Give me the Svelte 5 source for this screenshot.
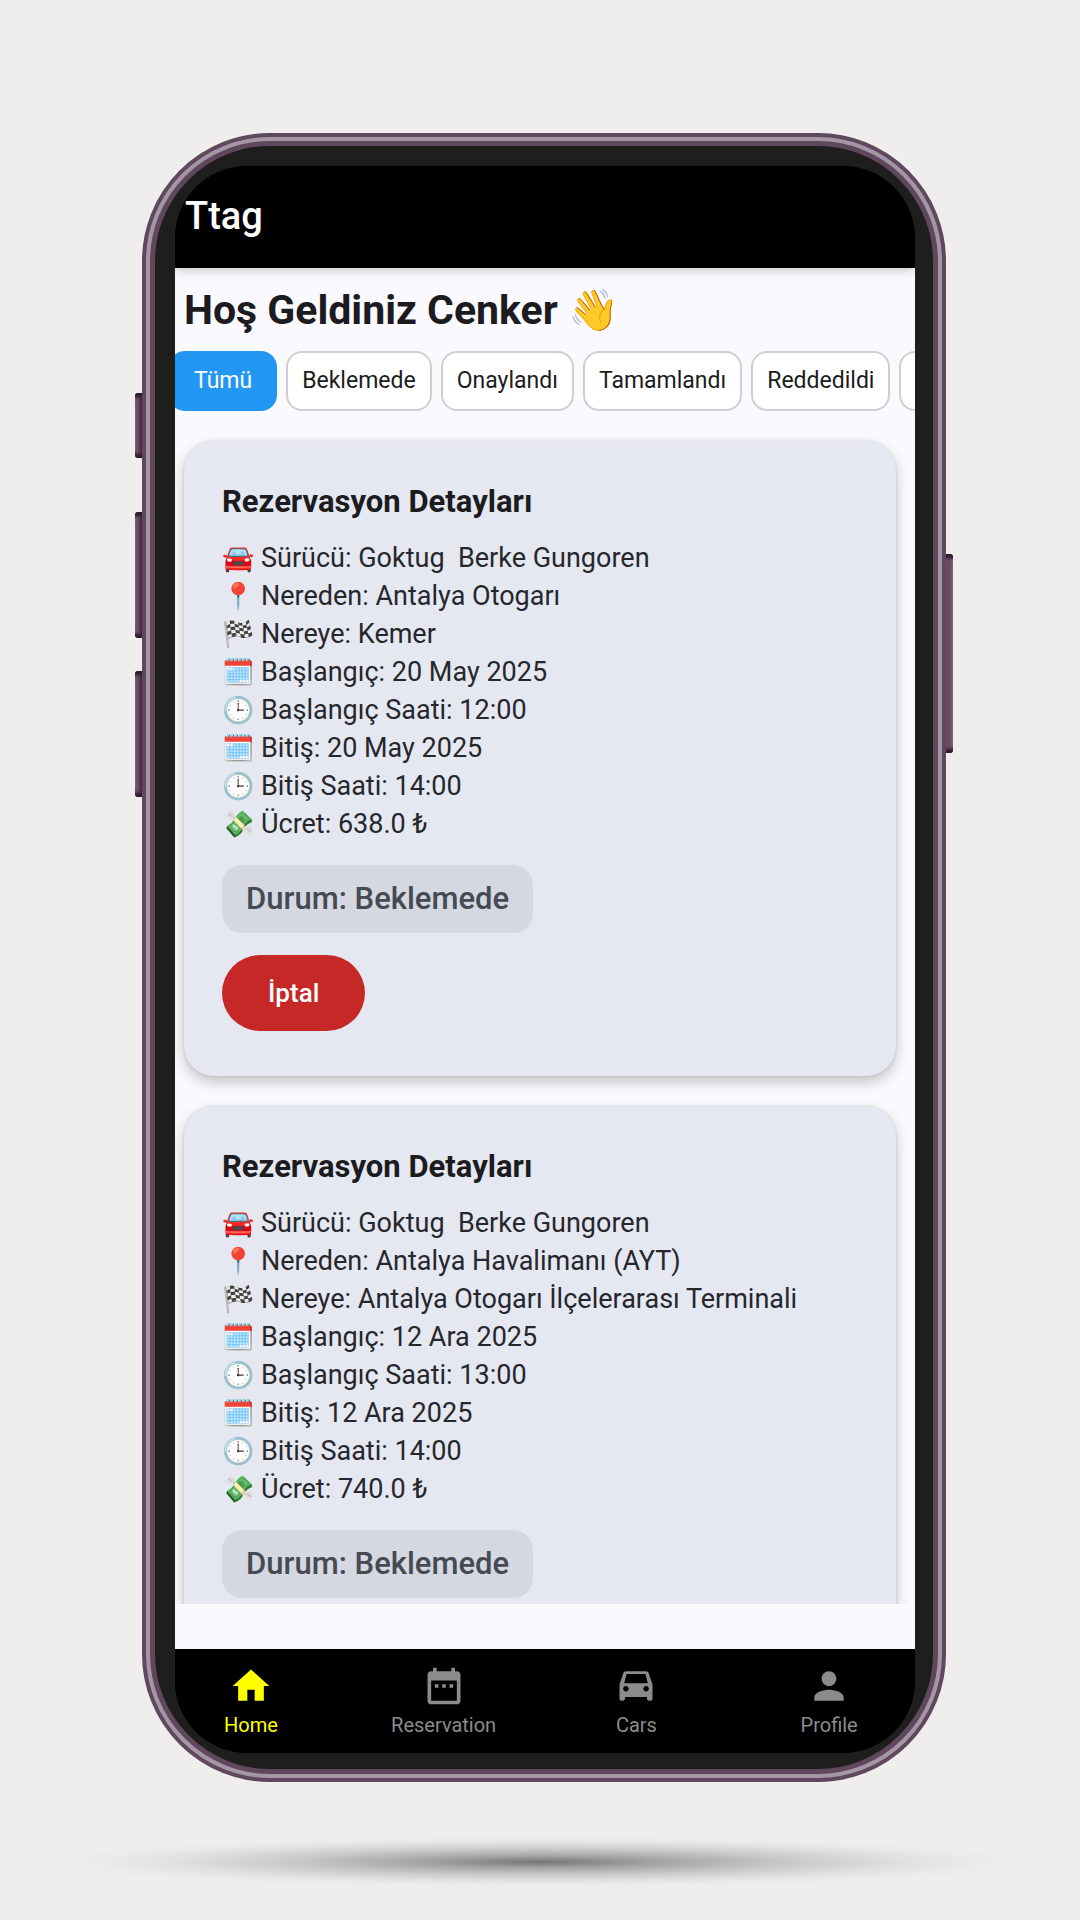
<script>
  const filters = ['Tümü', 'Beklemede', 'Onaylandı', 'Tamamlandı', 'Reddedildi'];
  let active = $state('Tümü');

  const reservations = [
    {
      driver: 'Goktug  Berke Gungoren', from: 'Antalya Otogarı', to: 'Kemer',
      start: '20 May 2025', startTime: '12:00', end: '20 May 2025', endTime: '14:00',
      price: '638.0 ₺', status: 'Beklemede'
    },
    {
      driver: 'Goktug  Berke Gungoren', from: 'Antalya Havalimanı (AYT)', to: 'Antalya Otogarı İlçelerarası Terminali',
      start: '12 Ara 2025', startTime: '13:00', end: '12 Ara 2025', endTime: '14:00',
      price: '740.0 ₺', status: 'Beklemede'
    }
  ];

  const rows = (r) => [
    ['🚘', 'Sürücü', r.driver],
    ['📍', 'Nereden', r.from],
    ['🏁', 'Nereye', r.to],
    ['🗓️', 'Başlangıç', r.start],
    ['🕒', 'Başlangıç Saati', r.startTime],
    ['🗓️', 'Bitiş', r.end],
    ['🕒', 'Bitiş Saati', r.endTime],
    ['💸', 'Ücret', r.price]
  ];

  const tabs = [
    { label: 'Home', d: 'M10 20v-6h4v6h5v-8h3L12 3 2 12h3v8z' },
    { label: 'Reservation', d: 'M9 11H7v2h2v-2zm4 0h-2v2h2v-2zm4 0h-2v2h2v-2zm2-7h-1V2h-2v2H8V2H6v2H5c-1.11 0-1.99.9-1.99 2L3 20c0 1.1.89 2 2 2h14c1.1 0 2-.9 2-2V6c0-1.1-.9-2-2-2zm0 16H5V9h14v11z' },
    { label: 'Cars', d: 'M18.92 5.01C18.72 4.42 18.16 4 17.5 4h-11c-.66 0-1.21.42-1.42 1.01L3 11v8c0 .55.45 1 1 1h1c.55 0 1-.45 1-1v-1h12v1c0 .55.45 1 1 1h1c.55 0 1-.45 1-1v-8l-2.08-5.99zM6.85 5.5h10.29l1.3 5H5.56l1.29-5zM6.5 15c-.83 0-1.5-.67-1.5-1.5S5.67 12 6.5 12s1.5.67 1.5 1.5S7.33 15 6.5 15zm11 0c-.83 0-1.5-.67-1.5-1.5s.67-1.5 1.5-1.5 1.5.67 1.5 1.5-.67 1.5-1.5 1.5z' },
    { label: 'Profile', d: 'M12 12c2.21 0 4-1.79 4-4s-1.79-4-4-4-4 1.79-4 4 1.79 4 4 4zm0 2c-2.67 0-8 1.34-8 4v2h16v-2c0-2.66-5.33-4-8-4z' }
  ];
</script>

<div class="stage">
  <div class="phone">
    <span class="key key-mute"></span>
    <span class="key key-up"></span>
    <span class="key key-down"></span>
    <span class="key key-power"></span>
    <div class="bezel">
      <div class="screen">
        <header><span>Ttag</span></header>
        <main>
          <h1>Hoş Geldiniz Cenker <span class="emoji">👋</span></h1>
          <div class="filters">
            {#each filters as f}
              <button class="chip" class:active={active === f} onclick={() => (active = f)}>{f}</button>
            {/each}
            <button class="chip" aria-label="İptal"></button>
          </div>
          <div class="list">
            {#each reservations as r}
              <article>
                <h2>Rezervasyon Detayları</h2>
                <ul>
                  {#each rows(r) as [icon, label, value]}
                    <li><span class="emoji">{icon}</span>{label}: {value}</li>
                  {/each}
                </ul>
                <p class="status">Durum: {r.status}</p>
                <button class="cancel">İptal</button>
              </article>
            {/each}
          </div>
        </main>
        <nav>
          {#each tabs as t, i}
            <a href="#{t.label}" class:current={i === 0}>
              <svg viewBox="0 0 24 24" aria-hidden="true"><path d={t.d} /></svg>
              {t.label}
            </a>
          {/each}
        </nav>
      </div>
    </div>
  </div>
  <div class="ground"></div>
</div>

<style>
  :global(body) {
    background: #efeeec;
  }
  .stage {
    box-sizing: border-box;
    min-height: 100vh;
    padding: 133px 134px 32px 142px;
    font-family: Roboto, 'Noto Sans', sans-serif;
    color: #1b1b20;
  }
  .phone {
    position: relative;
    box-sizing: border-box;
    aspect-ratio: 804 / 1649;
    border: 4px solid #5f475e;
    border-radius: 128px;
    background: #a596a5;
    padding: 4px;
  }
  .bezel {
    box-sizing: border-box;
    height: 100%;
    border: 5px solid #5f475e;
    border-radius: 120px;
    background: #1e1e1c;
    padding: 20px 18px 16px 20px;
  }
  .screen {
    display: flex;
    flex-direction: column;
    height: 100%;
    overflow: hidden;
    border-radius: 72px;
    background: #000;
  }
  .key {
    position: absolute;
    left: -11px;
    width: 7px;
    border-radius: 3px 0 0 3px;
    background: linear-gradient(90deg, #7d6279, #6b4a66 40%, #40283e);
    box-shadow: inset 0 7px 3px -3px #2e1c2c, inset 0 -7px 3px -3px #2e1c2c;
  }
  .key-mute { top: 256px; height: 65px; }
  .key-up { top: 375px; height: 126px; }
  .key-down { top: 534px; height: 126px; }
  .key-power {
    left: auto;
    right: -11px;
    top: 417px;
    height: 199px;
    border-radius: 0 3px 3px 0;
    background: linear-gradient(270deg, #7d6c79, #6b4a66 40%, #6b4a66);
  }
  header {
    display: flex;
    align-items: center;
    flex: none;
    box-sizing: border-box;
    height: 102px;
    padding: 0 10px 2px;
    background: #000;
    color: #fff;
    font-size: 38px;
    font-weight: 500;
    line-height: 44px;
    box-shadow: 0 2px 10px rgba(0, 0, 0, 0.2);
    z-index: 1;
  }
  main {
    display: flex;
    flex-direction: column;
    flex: 1;
    min-height: 0;
    padding-bottom: 45px;
    background: #faf9fe;
  }
  h1 {
    margin: 0;
    padding: 18px 9px 16px;
    font-size: 41px;
    font-weight: 700;
    line-height: 49px;
    white-space: nowrap;
  }
  .emoji {
    font-family: 'Noto Color Emoji', Roboto, sans-serif;
    font-weight: 400;
  }
  .filters {
    display: flex;
    flex: none;
    gap: 9px;
    margin-left: -6px;
    overflow: hidden;
  }
  .chip {
    flex: none;
    height: 60px;
    padding: 0 14px;
    border: 2px solid #cfcfcf;
    border-radius: 16px;
    background: #fff;
    color: #1c1c1c;
    font: 400 23px/28px Roboto, 'Noto Sans', sans-serif;
  }
  .chip.active {
    padding: 0 23px;
    border-color: #2296f3;
    background: #2296f3;
    color: #fff;
  }
  .list {
    flex: 1;
    min-height: 0;
    overflow: hidden;
    padding: 30px 19px 0 9px;
  }
  article {
    display: flex;
    flex-direction: column;
    align-items: flex-start;
    margin-bottom: 30px;
    padding: 42px 38px 45px;
    border-radius: 30px;
    background: #e5e8f1;
    box-shadow: 0 6px 14px rgba(0, 0, 0, 0.22), 0 0 3px rgba(0, 0, 0, 0.12);
  }
  h2 {
    margin: 0 0 18px;
    font-size: 31px;
    font-weight: 700;
    line-height: 38px;
  }
  ul {
    margin: 0;
    padding: 0;
    list-style: none;
  }
  li {
    color: #26272c;
    font-size: 27px;
    line-height: 38px;
    white-space: pre;
  }
  li .emoji {
    display: inline-block;
    width: 39px;
    font-size: 26px;
    line-height: 30px;
  }
  .status {
    margin: 22px 0;
    padding: 14px 24px;
    border-radius: 20px;
    background: #d5d8e0;
    color: #464a53;
    font-size: 31px;
    font-weight: 500;
    line-height: 40px;
  }
  .cancel {
    height: 76px;
    padding: 0 46px;
    border: 0;
    border-radius: 38px;
    background: #c62727;
    color: #fff;
    font: 500 26px/32px Roboto, 'Noto Sans', sans-serif;
  }
  nav {
    display: grid;
    grid-template-columns: repeat(4, 1fr);
    gap: 15px;
    flex: none;
    box-sizing: border-box;
    height: 104px;
    padding-top: 15px;
    background: #000;
    margin: 0 -3px 0 -13px;
  }
  nav a {
    display: flex;
    flex-direction: column;
    align-items: center;
    gap: 5px;
    color: #8b8b8b;
    font-size: 20px;
    line-height: 24px;
    text-decoration: none;
  }
  nav svg {
    width: 44px;
    height: 44px;
    fill: currentColor;
  }
  nav a.current {
    color: #ffff00;
  }
  .ground {
    height: 54px;
    margin: 53px -120px 0 -128px;
    background: radial-gradient(closest-side, #777673, #a5a4a3 22%, #cbcac9 48%, #e2e1df 70%, #ecebe9 84%, #efeeec 96%);
  }
</style>
